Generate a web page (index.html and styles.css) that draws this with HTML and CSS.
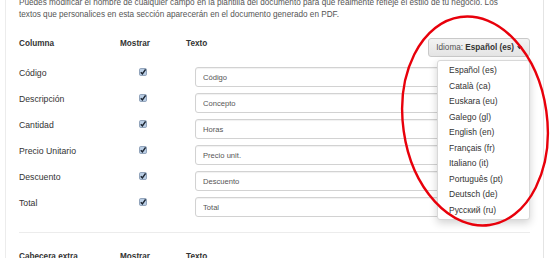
FILE: index.html
```html
<!DOCTYPE html>
<html lang="es">
<head>
    <meta charset="UTF-8">
    <meta name="viewport" content="width=device-width, initial-scale=1.0">
    <title>Plantilla del documento</title>
    <link rel="stylesheet" href="styles.css">
</head>
<body>
    <div class="panel">
        <p class="intro">Puedes modificar el nombre de cualquier campo en la plantilla del documento para que realmente refleje el estilo de tu negocio. Los textos que personalices en esta sección aparecerán en el documento generado en PDF.</p>

        <div class="fields">
            <div class="head">Columna</div>
            <div class="head">Mostrar</div>
            <div class="head head-text">
                <span>Texto</span>
                <div class="lang">
                    <div class="lang-btn">Idioma:&nbsp;<b>Español (es)</b><svg class="caret" viewBox="0 0 6 4"><path d="M0 0 H6 L3 3.6 Z"/></svg></div>
                    <ul class="lang-menu">
                        <li>Español (es)</li>
                        <li>Català (ca)</li>
                        <li>Euskara (eu)</li>
                        <li>Galego (gl)</li>
                        <li>English (en)</li>
                        <li>Français (fr)</li>
                        <li>Italiano (it)</li>
                        <li>Português (pt)</li>
                        <li>Deutsch (de)</li>
                        <li>Русский (ru)</li>
                    </ul>
                </div>
            </div>

            <div class="label">Código</div>
            <div class="check"><svg viewBox="0 0 8 8"><rect x="0.5" y="0.5" width="7" height="7" rx="1.2"/><path d="M1.8 4.2 L3.4 5.9 L6.6 1.4"/></svg></div>
            <div><input type="text" value="Código"></div>

            <div class="label">Descripción</div>
            <div class="check"><svg viewBox="0 0 8 8"><rect x="0.5" y="0.5" width="7" height="7" rx="1.2"/><path d="M1.8 4.2 L3.4 5.9 L6.6 1.4"/></svg></div>
            <div><input type="text" value="Concepto"></div>

            <div class="label">Cantidad</div>
            <div class="check"><svg viewBox="0 0 8 8"><rect x="0.5" y="0.5" width="7" height="7" rx="1.2"/><path d="M1.8 4.2 L3.4 5.9 L6.6 1.4"/></svg></div>
            <div><input type="text" value="Horas"></div>

            <div class="label">Precio Unitario</div>
            <div class="check"><svg viewBox="0 0 8 8"><rect x="0.5" y="0.5" width="7" height="7" rx="1.2"/><path d="M1.8 4.2 L3.4 5.9 L6.6 1.4"/></svg></div>
            <div><input type="text" value="Precio unit."></div>

            <div class="label">Descuento</div>
            <div class="check"><svg viewBox="0 0 8 8"><rect x="0.5" y="0.5" width="7" height="7" rx="1.2"/><path d="M1.8 4.2 L3.4 5.9 L6.6 1.4"/></svg></div>
            <div><input type="text" value="Descuento"></div>

            <div class="label">Total</div>
            <div class="check"><svg viewBox="0 0 8 8"><rect x="0.5" y="0.5" width="7" height="7" rx="1.2"/><path d="M1.8 4.2 L3.4 5.9 L6.6 1.4"/></svg></div>
            <div><input type="text" value="Total"></div>
        </div>

        <hr class="divider">

        <div class="fields">
            <div class="head">Cabecera extra</div>
            <div class="head">Mostrar</div>
            <div class="head">Texto</div>
        </div>
    </div>

    <!-- red marker drawn over the screenshot -->
    <svg class="marker" viewBox="0 0 550 258">
        <ellipse cx="475" cy="121" rx="72" ry="105" transform="rotate(-8 475 121)"/>
    </svg>
</body>
</html>
```

FILE: styles.css
```css
body {
    margin: 0;
    width: 550px;
    height: 258px;
    overflow: hidden;
    background: #ffffff;
    font-family: "Liberation Sans", Arial, sans-serif;
    font-size: 8.7px;
    color: #333;
    position: relative;
}
.panel {
    margin-left: 5px;
    width: 511px;
    height: 300px;
    padding: 0 13px 0 13px;
    border-left: 1px solid #ececec;
    border-right: 1px solid #e4e4e4;
}
.intro {
    margin: -3px 20px 0 0;
    font-size: 8.2px;
    line-height: 12px;
    color: #555;
}
.fields {
    display: grid;
    grid-template-columns: 101px 66px 1fr;
    row-gap: 6px;
    align-items: start;
    margin-top: 17px;
}
.head {
    font-weight: bold;
    font-size: 8.2px;
    color: #333;
    line-height: 12px;
}
.head-text {
    display: flex;
    justify-content: space-between;
    margin-bottom: 4px;
}
.label {
    line-height: 12px;
}
.check {
    padding: 1px 0 0 19px;
    line-height: 0;
}
.check svg {
    width: 8px;
    height: 8px;
}
.check rect {
    fill: #b9cde4;
    stroke: #7f93ad;
    stroke-width: 0.8;
}
.check path {
    fill: none;
    stroke: #1d2633;
    stroke-width: 1.5;
}
input[type="text"] {
    display: block;
    box-sizing: border-box;
    margin-left: 9px;
    width: calc(100% - 9px);
    height: 20px;
    padding: 0 7px;
    border: 1px solid #d2d2d2;
    border-radius: 3px;
    box-shadow: inset 0 1px 1px rgba(0, 0, 0, 0.06);
    font-family: "Liberation Sans", Arial, sans-serif;
    font-size: 7.6px;
    color: #555;
    background: #fff;
}
.lang {
    position: relative;
    flex-shrink: 0;
    font-weight: normal;
}
.lang-btn {
    display: flex;
    align-items: center;
    box-sizing: border-box;
    height: 19px;
    padding: 0 7px 0 7px;
    border: 1px solid #c9c9c9;
    border-radius: 3px;
    background: linear-gradient(#f3f3f3, #e4e4e4);
    font-size: 8.2px;
    color: #555;
    white-space: nowrap;
}
.lang-btn b {
    color: #333;
}
.caret {
    width: 5px;
    height: 4px;
    margin-left: 3px;
    fill: #333;
}
.lang-menu {
    position: absolute;
    top: 22px;
    right: 0;
    width: 91px;
    margin: 0;
    padding: 2px 0 1px;
    list-style: none;
    background: #fff;
    border: 1px solid #d8d8d8;
    border-radius: 3px;
    box-shadow: 0 3px 8px rgba(0, 0, 0, 0.18);
    z-index: 2;
}
.lang-menu li {
    padding-left: 11px;
    font-size: 8.5px;
    line-height: 15.5px;
    color: #333;
}
.divider {
    margin: 15px 0 0;
    border: 0;
    border-top: 1px solid #ececec;
}
.divider + .fields {
    margin-top: 18px;
}
.marker {
    position: absolute;
    left: 0;
    top: 0;
    width: 550px;
    height: 258px;
    pointer-events: none;
    z-index: 5;
}
.marker ellipse {
    fill: none;
    stroke: #e8000b;
    stroke-width: 2.4;
}
```
